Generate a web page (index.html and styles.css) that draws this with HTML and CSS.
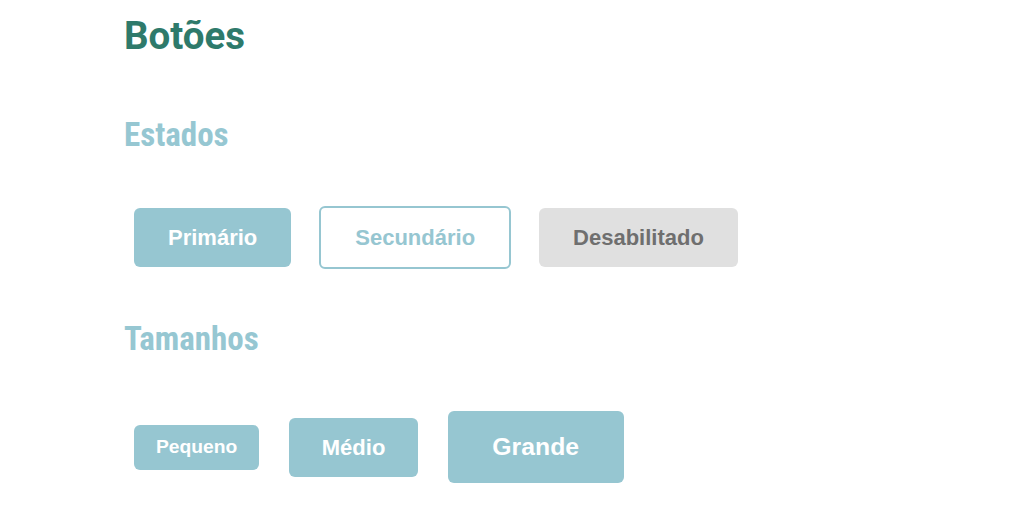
FILE: index.html
```html
<!DOCTYPE html>
<html lang="pt">
<head>
<meta charset="utf-8">
<title>Botões</title>
<link rel="stylesheet" href="styles.css">
</head>
<body>
<main class="page">
  <h1 class="title">Botões</h1>
  <h2 class="section">Estados</h2>
  <div class="row row-states">
    <button class="btn btn-primary">Primário</button>
    <button class="btn btn-secondary">Secundário</button>
    <button class="btn btn-disabled" disabled>Desabilitado</button>
  </div>
  <h2 class="section section-sizes">Tamanhos</h2>
  <div class="row row-sizes">
    <button class="btn btn-primary btn-sm">Pequeno</button>
    <button class="btn btn-primary btn-md">Médio</button>
    <button class="btn btn-primary btn-lg">Grande</button>
  </div>
</main>
</body>
</html>
```
FILE: styles.css
```css
html, body {
  margin: 0;
  padding: 0;
  background: #ffffff;
}

.page {
  display: flex;
  flex-direction: column;
  align-items: flex-start;
  padding: 12.5px 0 0 124px;
}

.title,
.section {
  margin: 0;
  font-family: Roboto, "Roboto Condensed", sans-serif;
  font-weight: 700;
}

.title {
  font-size: 38.5px;
  line-height: 46px;
  color: #2e7a6b;
}

.section {
  font-size: 33px;
  line-height: 40px;
  font-stretch: condensed;
  color: #96c7d2;
  margin-top: 56.5px;
}

.section-sizes {
  margin-top: 50px;
}

.row {
  display: flex;
  align-items: center;
  padding-left: 10px;
}

.row-states {
  margin-top: 51px;
  gap: 28px;
}

.row-sizes {
  margin-top: 52px;
  gap: 29.5px;
}

.btn {
  font-family: "Liberation Sans", Arial, sans-serif;
  font-weight: 700;
  font-size: 22px;
  line-height: 25px;
  padding: 17px 34px;
  border: none;
  border-radius: 6px;
  cursor: pointer;
  margin: 0;
}

.btn-primary {
  background: #96c6d1;
  color: #ffffff;
}

.btn-secondary {
  background: #ffffff;
  color: #96c6d1;
  border: 2px solid #96c6d1;
}

.btn-disabled {
  background: #e0e0e0;
  color: #6f6f6f;
  cursor: not-allowed;
}

.btn-sm {
  font-size: 19.25px;
  line-height: 22px;
  padding: 11.5px 22px;
}

.btn-md {
  padding: 17px 33px;
}

.btn-lg {
  font-size: 24.75px;
  line-height: 28px;
  padding: 22px 44.5px;
}
```
